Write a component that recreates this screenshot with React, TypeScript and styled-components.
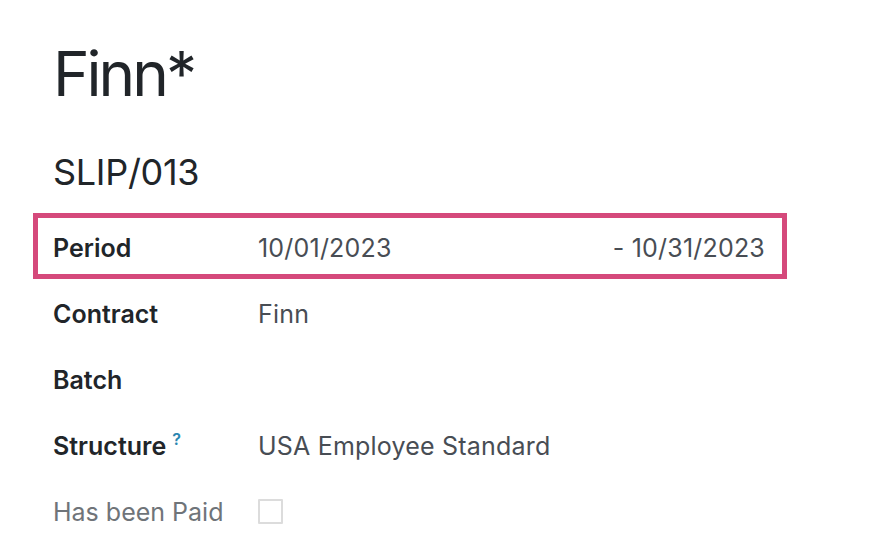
import React from 'react';
import styled, { createGlobalStyle } from 'styled-components';

const GlobalStyle = createGlobalStyle`
  body {
    margin: 0;
    background: #ffffff;
    font-family: Inter, "Noto Sans", "Liberation Sans", sans-serif;
  }
`;

const Sheet = styled.div`
  width: 870px;
  height: 550px;
  box-sizing: border-box;
  padding: 43px 0 0 33px;
  overflow: hidden;
`;

const Title = styled.h1`
  margin: 0 0 0 20px;
  font-size: 62px;
  line-height: 62px;
  font-weight: 400;
  letter-spacing: -3px;
  color: #212529;
`;

const Reference = styled.h2`
  margin: 49px 0 23px 20px;
  font-size: 36px;
  line-height: 36px;
  font-weight: 400;
  letter-spacing: -0.3px;
  color: #212529;
`;

const Fields = styled.div`
  display: flex;
  flex-direction: column;
  width: 754px;
`;

const Row = styled.div<{ $highlight?: boolean }>`
  display: grid;
  grid-template-columns: 205px 1fr;
  align-items: center;
  height: 66px;
  box-sizing: border-box;
  padding-top: 3px;
  border: ${p => (p.$highlight ? '5px solid #d5497b' : 'none')};
  padding-left: ${p => (p.$highlight ? '15px' : '20px')};
  padding-right: ${p => (p.$highlight ? '17px' : '22px')};
`;

const Label = styled.span<{ $muted?: boolean }>`
  font-size: 25px;
  font-weight: ${p => (p.$muted ? 400 : 600)};
  color: ${p => (p.$muted ? '#6f7479' : '#212529')};
  white-space: nowrap;
`;

const Help = styled.sup`
  font-size: 16px;
  font-weight: 600;
  color: #2a86b0;
  margin-left: 6px;
  vertical-align: 10px;
  line-height: 0;
`;

const Value = styled.span`
  font-size: 25px;
  letter-spacing: 0.2px;
  color: #484d54;
  white-space: nowrap;
`;

const Range = styled.div`
  display: flex;
  justify-content: space-between;
  font-size: 25px;
  letter-spacing: 0.2px;
  color: #484d54;
`;

const Checkbox = styled.span`
  display: block;
  width: 25px;
  height: 25px;
  box-sizing: border-box;
  border: 2px solid #dcdcdc;
  border-radius: 1px;
`;

export default function App() {
  return (
    <>
      <GlobalStyle />
      <Sheet>
        <Title>Finn*</Title>
        <Reference>SLIP/013</Reference>
        <Fields>
          <Row $highlight>
            <Label>Period</Label>
            <Range>
              <span>10/01/2023</span>
              <span>- 10/31/2023</span>
            </Range>
          </Row>
          <Row>
            <Label>Contract</Label>
            <Value>Finn</Value>
          </Row>
          <Row>
            <Label>Batch</Label>
            <Value />
          </Row>
          <Row>
            <Label>
              Structure<Help>?</Help>
            </Label>
            <Value>USA Employee Standard</Value>
          </Row>
          <Row>
            <Label $muted>Has been Paid</Label>
            <Checkbox />
          </Row>
        </Fields>
      </Sheet>
    </>
  );
}
